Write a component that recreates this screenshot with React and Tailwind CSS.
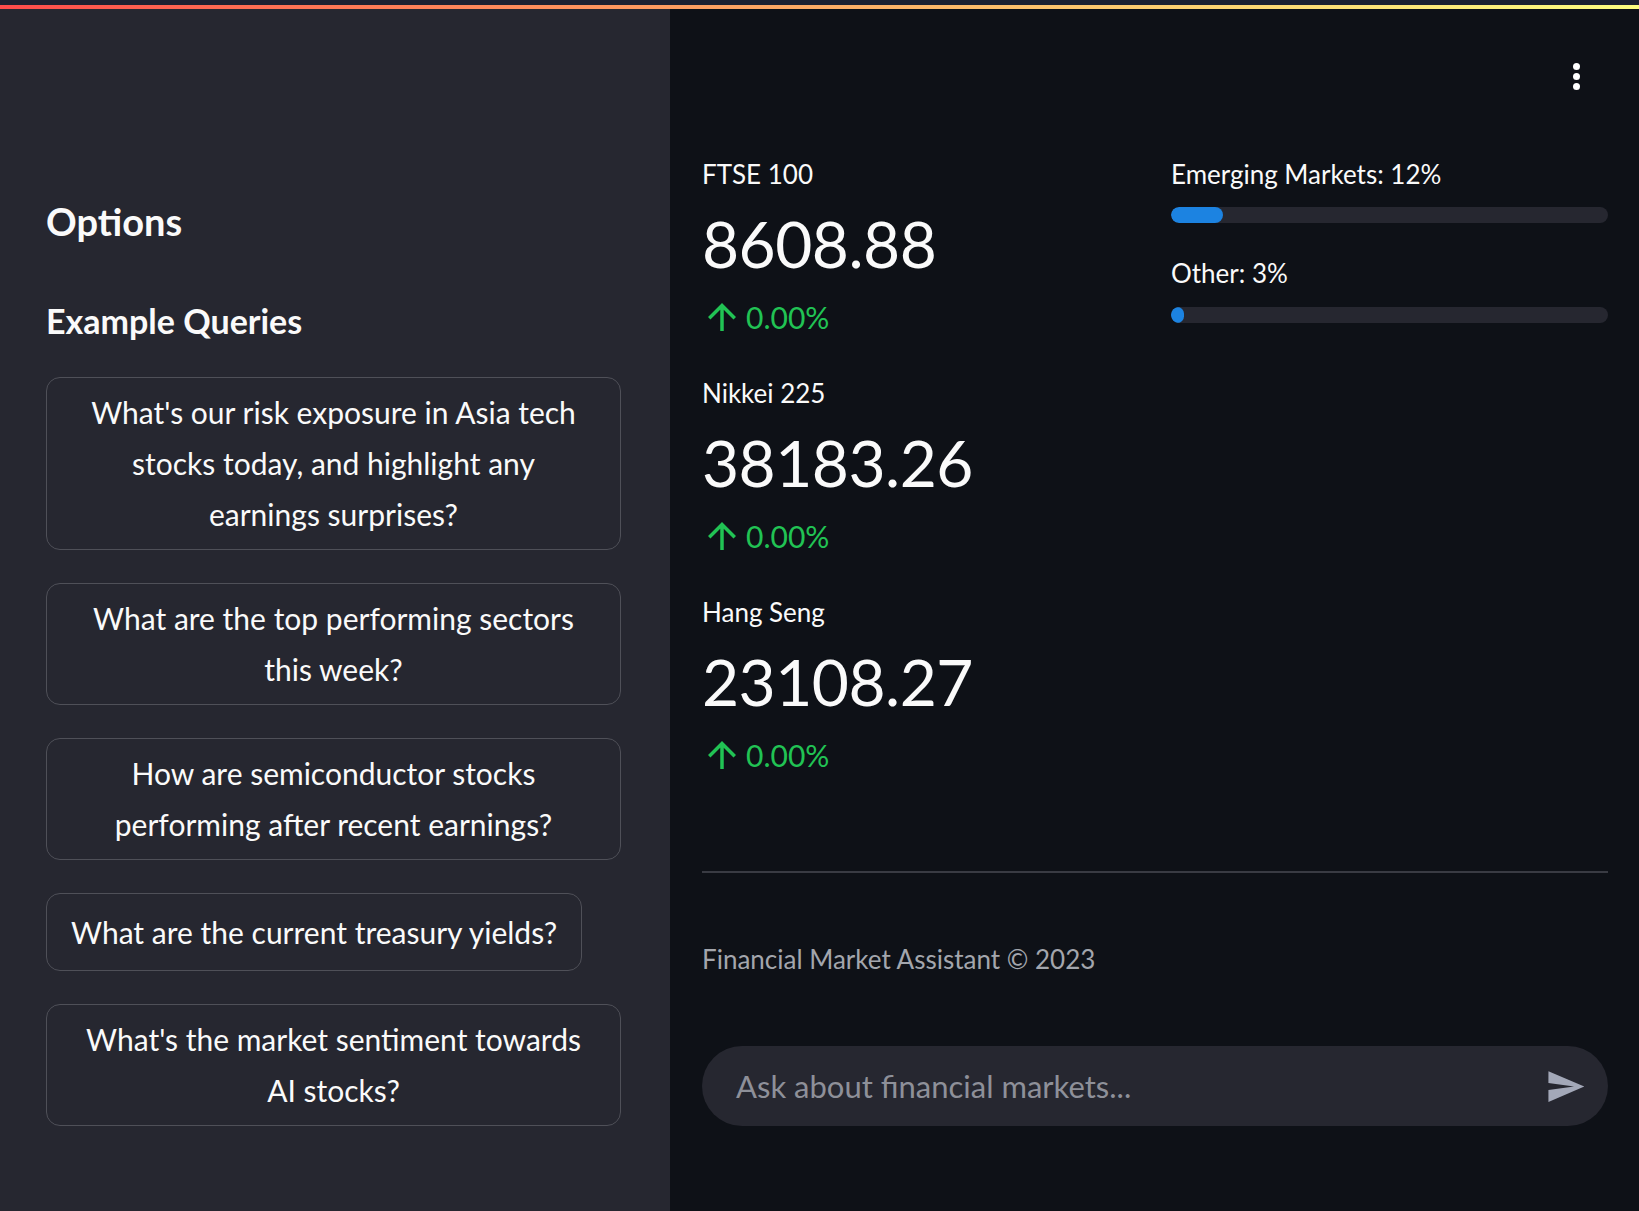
import React from 'react'

const font = { fontFamily: 'Lato, "Noto Sans", sans-serif' }

const queries = [
  { lines: ["What's our risk exposure in Asia tech", 'stocks today, and highlight any', 'earnings surprises?'], full: true },
  { lines: ['What are the top performing sectors', 'this week?'], full: true },
  { lines: ['How are semiconductor stocks', 'performing after recent earnings?'], full: true },
  { lines: ['What are the current treasury yields?'], full: false },
  { lines: ["What's the market sentiment towards", 'AI stocks?'], full: true },
]

const metrics = [
  { label: 'FTSE 100', value: '8608.88', delta: '0.00%' },
  { label: 'Nikkei 225', value: '38183.26', delta: '0.00%' },
  { label: 'Hang Seng', value: '23108.27', delta: '0.00%' },
]

const allocations = [
  { label: 'Emerging Markets: 12%', pct: 12 },
  { label: 'Other: 3%', pct: 3 },
]

function ArrowUp() {
  return (
    <svg width="42" height="42" viewBox="0 0 24 24" className="-ml-[1px] shrink-0" fill="#21c354">
      <path d="M4 12l1.41 1.41L11 7.83V20h2V7.83l5.58 5.59L20 12l-8-8-8 8z" />
    </svg>
  )
}

function Metric({ m }) {
  return (
    <div>
      <div className="text-[26px] leading-[40px] text-[#fafafa]">{m.label}</div>
      <div className="mt-[10px] text-[64px] leading-[80px] text-[#fafafa] tracking-[-0.5px]">{m.value}</div>
      <div className="mt-[12px] flex items-center h-[42px] text-[#21c354]">
        <ArrowUp />
        <span className="ml-[3px] text-[30px] leading-[42px]">{m.delta}</span>
      </div>
    </div>
  )
}

export default function App() {
  return (
    <div className="min-h-screen flex flex-col bg-[#0e1117] text-[#fafafa]" style={font}>
      <div className="h-[5px] bg-[#1e2131]" />
      <div className="h-[4px] bg-gradient-to-r from-[#ff4b4b] to-[#fffd80]" />

      <div className="flex flex-1">
        <aside className="w-[670px] shrink-0 bg-[#262730] pl-[46px] pr-[49px] pt-[188px] pb-[40px]">
          <h2 className="text-[38px] leading-[48px] font-bold">Options</h2>
          <h3 className="mt-[52px] text-[34px] leading-[48px] font-bold">Example Queries</h3>
          <div className="mt-[32px] flex flex-col gap-[33px]">
            {queries.map((q, i) => (
              <button
                key={i}
                className={`${q.full ? 'w-full' : 'w-fit'} min-h-[78px] flex flex-col items-center justify-center rounded-[14px] border border-[#4f5058] bg-[#262730] px-[24px] py-[9px] text-center text-[30px] leading-[51px] text-[#fafafa]`}
              >
                {q.lines.map((l, j) => (
                  <span key={j} className="block whitespace-nowrap">{l}</span>
                ))}
              </button>
            ))}
          </div>
        </aside>

        <main className="relative flex-1 pl-[32px] pr-[31px] pt-[145px]">
          <div className="absolute right-[59px] top-[54px] flex flex-col gap-[3px]">
            <span className="w-[7px] h-[7px] rounded-full bg-white" />
            <span className="w-[7px] h-[7px] rounded-full bg-white" />
            <span className="w-[7px] h-[7px] rounded-full bg-white" />
          </div>

          <div className="grid grid-cols-2 gap-[32px]">
            <div className="flex flex-col gap-[35px]">
              {metrics.map(m => <Metric key={m.label} m={m} />)}
            </div>
            <div>
              {allocations.map((a, i) => (
                <div key={a.label} className={i > 0 ? 'mt-[30px]' : ''}>
                  <div className="text-[26px] leading-[40px]">{a.label}</div>
                  <div className={`${i > 0 ? 'mt-[14px]' : 'mt-[13px]'} h-[16px] rounded-full bg-[#262730] overflow-hidden`}>
                    <div className="h-full rounded-full bg-[#1c83e1]" style={{ width: `${a.pct}%` }} />
                  </div>
                </div>
              ))}
            </div>
          </div>

          <div className="mt-[95px] h-[2px] bg-[#393b43]" />

          <p className="mt-[66px] text-[26px] leading-[40px] text-[#a3a6ad]">Financial Market Assistant © 2023</p>

          <div className="mt-[67px] h-[80px] rounded-full bg-[#262730] flex items-center pl-[34px] pr-[22px]">
            <span className="flex-1 text-[31px] text-[#8e9099]">Ask about financial markets...</span>
            <svg width="41" height="41" viewBox="0 0 24 24" fill="#a3a8b8">
              <path d="M2.01 21L23 12 2.01 3 2 10l15 2-15 2z" />
            </svg>
          </div>
        </main>
      </div>
    </div>
  )
}
